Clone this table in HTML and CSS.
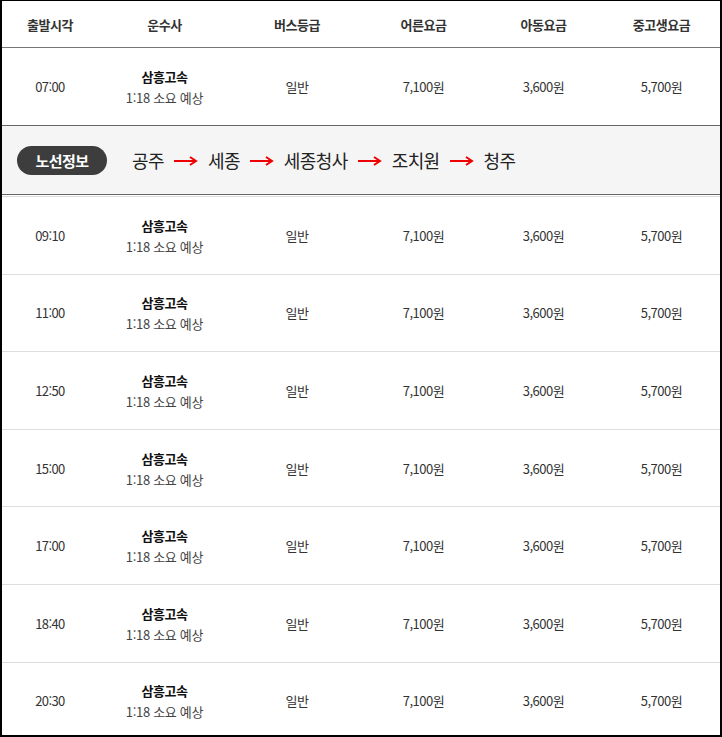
FILE: index.html
```html
<!DOCTYPE html>
<html lang="ko">
<head>
    <meta charset="UTF-8">
    <meta name="viewport" content="width=device-width, initial-scale=1.0">
    <title>시간표</title>
    <link rel="stylesheet" href="styles.css">
</head>
<body>
    <div class="schedule">
        <div class="row head">
            <div>출발시각</div>
            <div>운수사</div>
            <div>버스등급</div>
            <div>어른요금</div>
            <div>아동요금</div>
            <div>중고생요금</div>
        </div>

        <div class="row first">
            <div class="time">07:00</div>
            <div class="company"><strong>삼흥고속</strong><span>1:18 소요 예상</span></div>
            <div>일반</div>
            <div>7,100원</div>
            <div>3,600원</div>
            <div>5,700원</div>
        </div>

        <div class="route">
            <span class="route-label">노선정보</span>
            <span class="stop">공주</span>
            <svg class="arrow" viewBox="0 0 24 10"><line x1="0" y1="5" x2="22" y2="5"/><polyline points="16,1 22,5 16,9"/></svg>
            <span class="stop">세종</span>
            <svg class="arrow" viewBox="0 0 24 10"><line x1="0" y1="5" x2="22" y2="5"/><polyline points="16,1 22,5 16,9"/></svg>
            <span class="stop">세종청사</span>
            <svg class="arrow" viewBox="0 0 24 10"><line x1="0" y1="5" x2="22" y2="5"/><polyline points="16,1 22,5 16,9"/></svg>
            <span class="stop">조치원</span>
            <svg class="arrow" viewBox="0 0 24 10"><line x1="0" y1="5" x2="22" y2="5"/><polyline points="16,1 22,5 16,9"/></svg>
            <span class="stop">청주</span>
        </div>

        <div id="rows"></div>
    </div>

    <script>
        const times = ['09:10', '11:00', '12:50', '15:00', '17:00', '18:40', '20:30'];
        const rows = document.getElementById('rows');

        times.forEach(time => {
            const row = document.createElement('div');
            row.className = 'row';
            row.innerHTML = `
                <div class="time">${time}</div>
                <div class="company"><strong>삼흥고속</strong><span>1:18 소요 예상</span></div>
                <div>일반</div>
                <div>7,100원</div>
                <div>3,600원</div>
                <div>5,700원</div>`;
            rows.appendChild(row);
        });
    </script>
</body>
</html>
```

FILE: styles.css
```css
html, body {
    margin: 0;
    padding: 0;
}
body {
    font-family: "Noto Sans CJK KR", "Noto Sans", sans-serif;
    color: #333;
    background: #fff;
    height: 737px;
    box-sizing: border-box;
    border: 2px solid #000;
    border-top-width: 1px;
    overflow: hidden;
}
.schedule {
    width: 100%;
}
.row {
    display: grid;
    grid-template-columns: 96px 133px 132px 121px 119px 1fr;
    align-items: center;
    height: 77.6px;
    box-sizing: border-box;
    border-top: 1px solid #ddd;
    font-size: 13px;
    letter-spacing: -0.5px;
    text-align: center;
}
.row.head {
    height: 47px;
    border-top: none;
    border-bottom: 1px solid #777;
    font-weight: bold;
    color: #333;
}
.row.first {
    height: 77px;
    border-top: none;
}
.time {
    letter-spacing: -0.6px;
}
.company {
    display: flex;
    flex-direction: column;
    line-height: 21px;
    padding-top: 1px;
}
.company strong {
    color: #111;
}
.company span {
    color: #444;
    letter-spacing: -0.3px;
}
.route {
    display: flex;
    align-items: center;
    height: 70px;
    box-sizing: border-box;
    padding-left: 15px;
    background: #f5f5f5;
    border-top: 1px solid #666;
    border-bottom: 1px solid #666;
    margin-bottom: 1px;
}
.route-label {
    display: inline-block;
    width: 90px;
    height: 29px;
    line-height: 29px;
    border-radius: 15px;
    background: #3d3d3d;
    color: #fff;
    font-size: 15px;
    font-weight: bold;
    text-align: center;
    letter-spacing: -0.5px;
    margin-right: 25px;
}
.stop {
    font-size: 18px;
    color: #222;
    letter-spacing: -0.6px;
}
.arrow {
    width: 24px;
    height: 10px;
    margin: 2px 10px 0 10px;
    fill: none;
    stroke: #ee0000;
    stroke-width: 2;
}
```
